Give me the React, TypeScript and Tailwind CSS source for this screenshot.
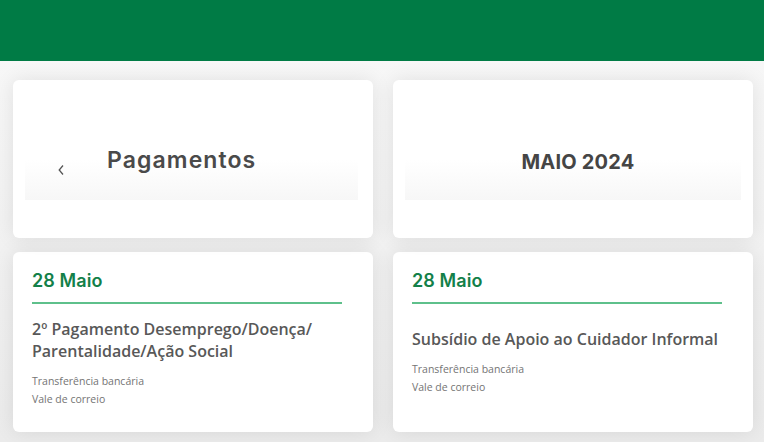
import React from "react";

const heading = { fontFamily: "Inter, 'Open Sans', sans-serif" };
const body = { fontFamily: "'Open Sans', 'Noto Sans', sans-serif" };

function PayCard({ title, single }: { title: string; single?: boolean }) {
  return (
    <div className="bg-white rounded-md shadow-[0_0_20px_rgba(0,0,0,0.09)] h-[180px] px-[19px] pt-[17px]" style={body}>
      <div className="text-[18px] leading-[24px] font-semibold text-[#138049] tracking-[0.1px]" style={heading}>
        28 Maio
      </div>
      <div className="h-[1.5px] bg-[#5ec08b] mt-[9px] mr-[12px]" />
      <div className={"text-[16px] leading-[22px] font-semibold text-[#585858] " + (single ? "mt-[24px]" : "mt-[14px]")}>
        {title}
      </div>
      <div className="text-[10.5px] leading-[18px] text-[#747474] mt-[10px]">
        <div>Transferência bancária</div>
        <div>Vale de correio</div>
      </div>
    </div>
  );
}

export default function App() {
  return (
    <div className="w-[764px] h-[442px] overflow-hidden bg-[#f0f0f0]">
      <div className="h-[61px] bg-[#007b45]" />
      <div className="pl-[13px] pt-[19px] grid grid-cols-[360px_360px] content-start gap-x-[20px] gap-y-[14px] bg-gradient-to-b from-[#f7f7f7] to-[#ebebeb] h-[381px]">
        <div className="bg-white rounded-md shadow-[0_0_20px_rgba(0,0,0,0.09)] h-[158px] relative">
          <div className="absolute left-[12px] right-[15px] top-[40px] h-[80px] bg-gradient-to-b from-white via-white to-[#f7f7f7]" />
          <div className="absolute inset-0 flex items-center">
            <svg width="8" height="12" viewBox="0 0 8 12" className="ml-[44px] mt-[22px]">
              <path d="M6 1.5 L2.2 6 L6 10.5" fill="none" stroke="#555" strokeWidth="1.3" />
            </svg>
            <span className="ml-[42px] mt-[2px] text-[23px] font-semibold text-[#4a4a4a] tracking-[1.1px]" style={heading}>Pagamentos</span>
          </div>
        </div>
        <div className="bg-white rounded-md shadow-[0_0_20px_rgba(0,0,0,0.09)] h-[158px] relative">
          <div className="absolute left-[12px] right-[12px] top-[40px] h-[80px] bg-gradient-to-b from-white via-white to-[#f7f7f7]" />
          <div className="absolute inset-0 flex items-center justify-center">
            <span className="ml-[10px] mt-[5px] text-[20px] font-bold text-[#454545] tracking-[0.2px]" style={heading}>MAIO 2024</span>
          </div>
        </div>
        <PayCard title="2º Pagamento Desemprego/Doença/ Parentalidade/Ação Social" />
        <PayCard title="Subsídio de Apoio ao Cuidador Informal" single />
      </div>
    </div>
  );
}
